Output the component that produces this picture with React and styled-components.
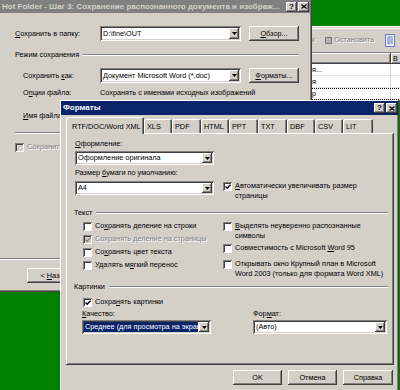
import React from 'react';
import styled, { createGlobalStyle, css } from 'styled-components';

const FACE = '#d4d0c8';
const NAVY = '#0a246a';

const GlobalStyle = createGlobalStyle`
  html, body { margin: 0; padding: 0; background: #008000; }
  body {
    font-family: "Liberation Sans", Arial, sans-serif;
    font-size: 7.3px;
    line-height: 10px;
    color: #000;
  }
  * { box-sizing: border-box; }
`;

const thinRaised = css`
  box-shadow: inset -1px -1px 0 #404040, inset 1px 1px 0 #ffffff, inset -2px -2px 0 #808080;
`;
const raisedBorder = css`
  box-shadow: inset -1px -1px 0 #404040, inset 1px 1px 0 #ffffff, inset -2px -2px 0 #808080, inset 2px 2px 0 ${FACE};
`;
const sunkenBorder = css`
  box-shadow: inset 1px 1px 0 #808080, inset -1px -1px 0 #ffffff, inset 2px 2px 0 #404040, inset -2px -2px 0 ${FACE};
`;
const disabledText = css`
  color: #808080;
  text-shadow: 1px 1px 0 #ffffff;
`;

const Desktop = styled.div`
  position: relative;
  width: 400px;
  height: 390px;
  overflow: hidden;
  background: #008000;
`;

const Window = styled.div`
  position: absolute;
  left: ${p => p.$x}px;
  top: ${p => p.$y}px;
  width: ${p => p.$w}px;
  height: ${p => p.$h}px;
  padding: ${p => p.$frame}px;
  background: ${FACE};
  ${thinRaised};
  display: flex;
  flex-direction: column;
  overflow: hidden;
`;

const TitleBar = styled.div`
  flex: none;
  height: ${p => p.$h}px;
  display: flex;
  align-items: center;
  padding: 0 1px 0 2px;
  background: ${p => (p.$active ? NAVY : '#808080')};
  color: ${p => (p.$active ? '#ffffff' : FACE)};
  font-size: 8px;
  font-weight: bold;
  white-space: nowrap;
`;

const TitleText = styled.span`
  flex: 1;
  overflow: hidden;
`;

const CaptionButton = styled.span`
  flex: none;
  width: 11px;
  height: 10px;
  margin-left: ${p => p.$ml || 0}px;
  background: ${FACE};
  ${thinRaised};
  display: flex;
  align-items: center;
  justify-content: center;
  color: #000;
  font-size: 8px;
  line-height: 8px;
  font-weight: bold;
`;

const CloseGlyph = () => (
  <svg width="6" height="5" viewBox="0 0 6 5">
    <path d="M0.5 0.5 L5.5 4.5 M5.5 0.5 L0.5 4.5" stroke="#000" strokeWidth="1.2" />
  </svg>
);

const Arrow = () => (
  <svg width="5" height="3" viewBox="0 0 5 3">
    <path d="M0 0 H5 L2.5 3 Z" fill="#000" />
  </svg>
);

const U = styled.span`
  text-decoration: underline;
`;

const Label = styled.div`
  flex: none;
  width: ${p => (p.$w ? `${p.$w}px` : 'auto')};
  line-height: 10px;
  white-space: nowrap;
  margin-top: ${p => p.$mt || 0}px;
  ${p => p.$disabled && disabledText};
`;

const Field = styled.div`
  flex: none;
  width: ${p => (p.$w ? `${p.$w}px` : 'auto')};
  height: ${p => p.$h || 14}px;
  margin-top: ${p => p.$mt || 0}px;
  background: #ffffff;
  ${sunkenBorder};
  display: flex;
  align-items: stretch;
  padding: 2px;
  min-width: 0;
`;

const FieldText = styled.span`
  flex: 1;
  min-width: 0;
  display: flex;
  align-items: center;
  padding-left: 1px;
  margin-right: 1px;
  white-space: nowrap;
  overflow: hidden;
  background: ${p => (p.$selected ? NAVY : 'transparent')};
  color: ${p => (p.$selected ? '#ffffff' : '#000')};
`;

const DropButton = styled.span`
  flex: none;
  width: 10px;
  background: ${FACE};
  ${thinRaised};
  display: flex;
  align-items: center;
  justify-content: center;
`;

const Combo = ({ children, selected, ...rest }) => (
  <Field {...rest}>
    <FieldText $selected={selected}>{children}</FieldText>
    <DropButton>
      <Arrow />
    </DropButton>
  </Field>
);

const Button = styled.div`
  flex: none;
  width: ${p => p.$w}px;
  height: 15px;
  margin-left: ${p => p.$ml || 0}px;
  background: ${FACE};
  ${raisedBorder};
  display: flex;
  align-items: center;
  justify-content: center;
  white-space: nowrap;
`;

const CheckRow = styled.div`
  display: flex;
  align-items: flex-start;
  gap: 3px;
  margin-top: ${p => p.$mt || 0}px;
  grid-column: ${p => p.$col || 'auto'};
  grid-row: ${p => p.$row || 'auto'};
  min-width: 0;
  overflow: hidden;
`;

const Box = styled.span`
  flex: none;
  width: 9px;
  height: 9px;
  margin-top: 1px;
  background: ${p => (p.$disabled ? FACE : '#ffffff')};
  box-shadow: inset 1px 1px 0 #808080, inset -1px -1px 0 #ffffff, inset 2px 2px 0 #404040;
  display: flex;
  align-items: center;
  justify-content: center;
  padding: 1px 0 0 1px;
`;

const CheckText = styled.span`
  line-height: 10px;
  white-space: nowrap;
  ${p => p.$disabled && disabledText};
`;

const Check = ({ checked, disabled, children, ...rest }) => (
  <CheckRow {...rest}>
    <Box $disabled={disabled}>
      {checked && (
        <svg width="6" height="6" viewBox="0 0 6 6">
          <path d="M0.5 2.5 L2.2 4.3 L5.5 0.8" stroke={disabled ? '#808080' : '#000'} strokeWidth="1.4" fill="none" />
        </svg>
      )}
    </Box>
    <CheckText $disabled={disabled}>{children}</CheckText>
  </CheckRow>
);

const GroupHead = styled.div`
  display: flex;
  align-items: center;
  gap: 4px;
  height: 10px;
  margin-top: ${p => p.$mt || 0}px;
  white-space: nowrap;
`;

const GroupLine = styled.span`
  flex: 1;
  height: 2px;
  border-top: 1px solid #808080;
  border-bottom: 1px solid #ffffff;
`;

const Separator = styled.div`
  flex: none;
  height: 2px;
  margin-top: ${p => p.$mt || 0}px;
  border-top: 1px solid #808080;
  border-bottom: 1px solid #ffffff;
`;

/* ---------- background application window ---------- */

const AppToolbar = styled.div`
  flex: none;
  height: 25px;
  display: flex;
  align-items: center;
  padding-left: 1px;
  border-bottom: 1px solid #808080;
  box-shadow: inset 0 1px 0 #ffffff;
`;

const ToolText = styled.span`
  white-space: nowrap;
  margin-left: ${p => p.$ml || 0}px;
  ${disabledText};
`;

const ToolIcon = styled.span`
  display: flex;
  margin-left: ${p => p.$ml || 0}px;
`;

const ListHeader = styled.div`
  flex: none;
  height: 11px;
  display: flex;
  background: ${FACE};
`;

const HeaderCell = styled.div`
  flex: none;
  width: ${p => (p.$w ? `${p.$w}px` : 'auto')};
  flex-grow: ${p => (p.$w ? 0 : 1)};
  ${thinRaised};
  padding-left: 2px;
  line-height: 11px;
  white-space: nowrap;
  overflow: hidden;
`;

const ListRow = styled.div`
  flex: none;
  height: 12px;
  display: flex;
  background: #ffffff;
  border-bottom: 1px solid #e4e2dc;
  outline: ${p => (p.$focus ? '1px dotted #000' : 'none')};
  outline-offset: -1px;
`;

const ListCell = styled.div`
  flex: none;
  width: ${p => (p.$w ? `${p.$w}px` : 'auto')};
  flex-grow: ${p => (p.$w ? 0 : 1)};
  padding-left: 1px;
  line-height: 12px;
  white-space: nowrap;
  overflow: hidden;
  border-right: ${p => (p.$w ? `1px solid ${FACE}` : 'none')};
`;

/* ---------- Hot Folder dialog ---------- */

const HFBody = styled.div`
  flex: 1;
  display: flex;
  flex-direction: column;
`;

const HFContent = styled.div`
  flex: 1;
  display: flex;
  flex-direction: column;
  padding: 13px 11px 0 15px;
`;

const FormRow = styled.div`
  display: flex;
  align-items: center;
  margin-top: ${p => p.$mt || 0}px;
`;

const Indented = styled.div`
  display: flex;
  flex-direction: column;
  padding-left: 8px;
`;

const HFFooter = styled.div`
  flex: none;
  display: flex;
  flex-direction: column;
`;

const FooterButtons = styled.div`
  display: flex;
  gap: 6px;
  padding: 8px 0 7px 27px;
`;

/* ---------- Formats dialog ---------- */

const FBody = styled.div`
  flex: 1;
  display: flex;
  flex-direction: column;
  padding: 2px 4px 0 5px;
`;

const TabStrip = styled.div`
  flex: none;
  height: 16px;
  display: flex;
  align-items: flex-end;
  position: relative;
  z-index: 1;
`;

const Tab = styled.div`
  flex: none;
  width: ${p => p.$w}px;
  height: ${p => (p.$sel ? 17 : 14)}px;
  margin-bottom: ${p => (p.$sel ? -1 : 0)}px;
  padding: ${p => (p.$sel ? '5px 0 0 6px' : '3px 0 0 3px')};
  background: ${FACE};
  box-shadow: inset 1px 1px 0 #ffffff, inset -1px 0 0 #404040, inset -2px 0 0 #808080;
  border-radius: 2px 2px 0 0;
  white-space: nowrap;
  overflow: hidden;
  line-height: 10px;
`;

const Panel = styled.div`
  flex: none;
  width: 328px;
  height: 232px;
  background: ${FACE};
  ${thinRaised};
  padding: 6px 6px 0 8px;
  display: flex;
  flex-direction: column;
`;

const TopGrid = styled.div`
  display: grid;
  grid-template-columns: 139px 1fr;
  column-gap: 9px;
  margin-left: 1px;
  align-items: start;
`;

const Cell = styled.div`
  grid-column: ${p => p.$col};
  grid-row: ${p => p.$row};
  margin-top: ${p => p.$mt || 0}px;
  display: flex;
  flex-direction: column;
`;

const TwoCols = styled.div`
  display: grid;
  grid-template-columns: 140px 1fr;
  padding-left: 9px;
  margin-top: 3px;
  align-items: start;
`;

const CheckIndent = styled.div`
  display: flex;
  padding-left: 9px;
  margin-top: 5px;
`;

const Col = styled.div`
  display: flex;
  flex-direction: column;
  gap: ${p => p.$gap || 0}px;
`;

const PicGrid = styled.div`
  display: grid;
  grid-template-columns: 129px 134px;
  column-gap: 42px;
  padding-left: 8px;
  margin-top: 2px;
`;

const DialogButtons = styled.div`
  display: flex;
  justify-content: flex-end;
  gap: 6px;
  margin-top: 5px;
  padding-right: 1px;
`;

const tabs = [
  { t: 'RTF/DOC/Word XML', w: 78, sel: true },
  { t: 'XLS', w: 28 },
  { t: 'PDF', w: 29 },
  { t: 'HTML', w: 28 },
  { t: 'PPT', w: 29 },
  { t: 'TXT', w: 29 },
  { t: 'DBF', w: 28 },
  { t: 'CSV', w: 28 },
  { t: 'LIT', w: 30 },
];

const StopIcon = () => (
  <svg width="7" height="7" viewBox="0 0 7 7">
    <rect x="0.5" y="0.5" width="6" height="6" fill="#a8a8a8" stroke="#808080" />
    <path d="M2 2h1v1H2zM4 2h1v1H4zM2 4h1v1H2zM4 4h1v1H4z" fill="#d8d8d8" />
  </svg>
);

const ViewIcon = () => (
  <svg width="10" height="13" viewBox="0 0 10 13">
    <rect x="0.5" y="0.5" width="9" height="12" fill="#eef0fb" stroke="#6b7fd0" />
    <path d="M2 3h6M2 5h6M2 7h6M2 9h6" stroke="#6b7fd0" strokeWidth="1" />
    <path d="M4 2v9" stroke="#9aa8e0" strokeWidth="1" />
  </svg>
);

export default function App() {
  return (
    <>
      <GlobalStyle />
      <Desktop>
        {/* main application window behind the dialogs */}
        <Window $x={309} $y={26} $w={100} $h={76} $frame={2}>
          <AppToolbar>
            <ToolText>к</ToolText>
            <ToolIcon $ml={10}>
              <StopIcon />
            </ToolIcon>
            <ToolText $ml={2}>Остановить</ToolText>
            <ToolIcon $ml={11}>
              <ViewIcon />
            </ToolIcon>
          </AppToolbar>
          <ListHeader>
            <HeaderCell $w={80} />
            <HeaderCell>В</HeaderCell>
          </ListHeader>
          <ListRow>
            <ListCell $w={80}>я...</ListCell>
            <ListCell />
          </ListRow>
          <ListRow>
            <ListCell $w={80}>я</ListCell>
            <ListCell />
          </ListRow>
          <ListRow $focus>
            <ListCell $w={80}>р</ListCell>
            <ListCell />
          </ListRow>
        </Window>

        {/* Hot Folder wizard dialog */}
        <Window $x={-2} $y={-2} $w={314} $h={294} $frame={2}>
          <TitleBar $h={13}>
            <TitleText>Hot Folder - Шаг 3: Сохранение распознанного документа и изображ...</TitleText>
            <CaptionButton>?</CaptionButton>
            <CaptionButton $ml={1}>
              <CloseGlyph />
            </CaptionButton>
          </TitleBar>
          <HFBody>
            <HFContent>
              <FormRow>
                <Label $w={85}>
                  <U>С</U>охранить в папку:
                </Label>
                <Combo $w={141} $h={15}>D:\fine\OUT</Combo>
                <Button $w={50} $ml={8}>
                  <span>
                    <U>О</U>бзор...
                  </span>
                </Button>
              </FormRow>
              <GroupHead $mt={9}>
                Режим сохранения
                <GroupLine />
              </GroupHead>
              <Indented>
                <FormRow $mt={8}>
                  <Label $w={77}>
                    Сохранить <U>к</U>ак:
                  </Label>
                  <Combo $w={141} $h={15}>Документ Microsoft Word (*.doc)</Combo>
                  <Button $w={50} $ml={8}>
                    <span>
                      <U>Ф</U>орматы...
                    </span>
                  </Button>
                </FormRow>
                <FormRow $mt={5}>
                  <Label $w={77}>
                    О<U>п</U>ции файла:
                  </Label>
                  <Label>Сохранять с именами исходных изображений</Label>
                </FormRow>
                <FormRow $mt={10}>
                  <Label $w={77}>
                    <U>И</U>мя файла:
                  </Label>
                  <Field $w={141} $h={15} />
                </FormRow>
              </Indented>
              <Separator $mt={9} />
              <Check $mt={8} disabled>
                Сохранить
              </Check>
            </HFContent>
            <HFFooter>
              <Separator />
              <FooterButtons>
                <Button $w={54}>
                  <span>
                    &lt; <U>Н</U>азад
                  </span>
                </Button>
                <Button $w={54}>
                  <span>
                    <U>Д</U>алее &gt;
                  </span>
                </Button>
              </FooterButtons>
            </HFFooter>
          </HFBody>
        </Window>

        {/* Formats dialog (active) */}
        <Window $x={60} $y={100} $w={339} $h={300} $frame={1}>
          <TitleBar $h={14} $active>
            <TitleText>Форматы</TitleText>
            <CaptionButton>?</CaptionButton>
            <CaptionButton $ml={1}>
              <CloseGlyph />
            </CaptionButton>
          </TitleBar>
          <FBody>
            <TabStrip>
              {tabs.map(tab => (
                <Tab key={tab.t} $w={tab.w} $sel={tab.sel}>
                  {tab.t}
                </Tab>
              ))}
            </TabStrip>
            <Panel>
              <TopGrid>
                <Cell $col={1} $row={1}>
                  <Label>
                    <U>О</U>формление:
                  </Label>
                </Cell>
                <Cell $col={1} $row={2} $mt={2}>
                  <Combo>Оформление оригинала</Combo>
                </Cell>
                <Cell $col={1} $row={3} $mt={3}>
                  <Label>
                    Размер <U>б</U>умаги по умолчанию:
                  </Label>
                </Cell>
                <Cell $col={1} $row={4} $mt={3}>
                  <Combo>A4</Combo>
                </Cell>
                <Check checked $col={2} $row={4} $mt={3}>
                  <U>А</U>втоматически увеличивать размер
                  <br />
                  страницы
                </Check>
              </TopGrid>

              <GroupHead $mt={7}>
                Текст
                <GroupLine />
              </GroupHead>
              <TwoCols>
                <Col $gap={3}>
                  <Check>
                    Со<U>х</U>ранять деление на строки
                  </Check>
                  <Check checked disabled>
                    Сохранять деление на страницы
                  </Check>
                  <Check>
                    Со<U>х</U>ранять цвет текста
                  </Check>
                  <Check>
                    Удалять м<U>я</U>гкий перенос
                  </Check>
                </Col>
                <Col>
                  <Check>
                    <U>В</U>ыделять неуверенно распознанные
                    <br />
                    символы
                  </Check>
                  <Check $mt={2}>
                    Совместимость с Microsoft <U>W</U>ord 95
                  </Check>
                  <Check $mt={6}>
                    Открывать окно Крупный план в Microsoft
                    <br />
                    Word 2003 (только для формата Word XML)
                  </Check>
                </Col>
              </TwoCols>

              <GroupHead $mt={3}>
                Картинки
                <GroupLine />
              </GroupHead>
              <CheckIndent>
                <Check checked>
                  Сохра<U>н</U>ять картинки
                </Check>
              </CheckIndent>
              <PicGrid>
                <Col>
                  <Label>
                    <U>К</U>ачество:
                  </Label>
                  <Combo $mt={1} selected>
                    Среднее (для просмотра на экране)
                  </Combo>
                </Col>
                <Col>
                  <Label>
                    Фор<U>м</U>ат:
                  </Label>
                  <Combo $mt={1}>(Авто)</Combo>
                </Col>
              </PicGrid>
            </Panel>
            <DialogButtons>
              <Button $w={49}>OK</Button>
              <Button $w={49}>Отмена</Button>
              <Button $w={50}>Справка</Button>
            </DialogButtons>
          </FBody>
        </Window>
      </Desktop>
    </>
  );
}
